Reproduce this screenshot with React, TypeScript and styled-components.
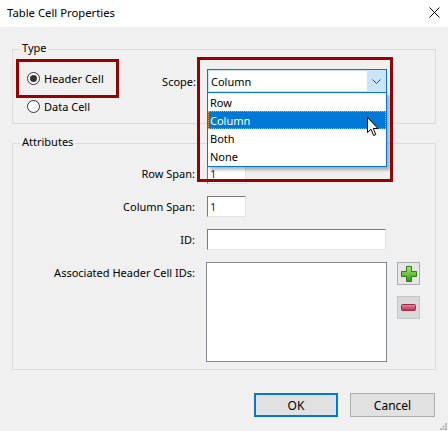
import styled, { createGlobalStyle } from "styled-components";

const GlobalStyle = createGlobalStyle`
  html, body { margin: 0; padding: 0; }
  body {
    font-family: "Noto Sans", "Liberation Sans", sans-serif;
    font-size: 11px;
    color: #000;
  }
`;

const Window = styled.div`
  position: relative;
  width: 448px;
  height: 431px;
  background: #f0f0f0;
  display: flex;
  flex-direction: column;
  overflow: hidden;
`;

const TitleBar = styled.div`
  box-sizing: border-box;
  height: 27px;
  background: #fff;
  display: flex;
  align-items: center;
  justify-content: space-between;
  padding: 0 8px 3px 7px;
  font-size: 11.3px;
`;

const Group = styled.div<{ $height: number; $top: number }>`
  box-sizing: border-box;
  margin: ${(p) => p.$top}px 0 0 12px;
  width: 424px;
  height: ${(p) => p.$height}px;
  border: 1px solid #dcdcdc;
  display: flex;
  flex-direction: column;
`;

const GroupTitle = styled.div`
  align-self: flex-start;
  margin: -9px 0 0 7px;
  padding: 0 2px;
  line-height: 14px;
  background: #f0f0f0;
`;

const TypeBody = styled.div`
  display: flex;
  padding: 4px 0 0 3px;
`;

const RadioCol = styled.div`
  display: flex;
  flex-direction: column;
  width: 103px;
`;

const Highlight = styled.div`
  box-sizing: border-box;
  width: 103px;
  height: 39px;
  border: 3px solid #990000;
  display: flex;
  align-items: center;
  padding: 0 0 1px 8px;
`;

const RadioRow = styled.div<{ $inset?: number }>`
  display: flex;
  align-items: center;
  gap: 4px;
  height: 15px;
  padding-left: ${(p) => p.$inset ?? 0}px;
  margin-top: ${(p) => (p.$inset ? 1 : 0)}px;
`;

const RadioDot = styled.span<{ $checked?: boolean }>`
  box-sizing: border-box;
  width: 13px;
  height: 13px;
  border-radius: 50%;
  border: 1px solid #333;
  background: #fff;
  display: flex;
  align-items: center;
  justify-content: center;
  &::after {
    content: "";
    width: 7px;
    height: 7px;
    border-radius: 50%;
    background: ${(p) => (p.$checked ? "#333" : "transparent")};
  }
`;

const ScopeArea = styled.div`
  display: flex;
  align-items: center;
  margin-top: 10px;
  height: 24px;
`;

const ScopeLabel = styled.div`
  width: 77px;
  text-align: right;
  padding-right: 1px;
  margin-right: 10px;
`;

const ComboWrap = styled.div`
  position: relative;
  width: 180px;
  height: 24px;
`;

const Combo = styled.div`
  box-sizing: border-box;
  height: 24px;
  border: 1px solid #0078d7;
  background: #cce4f7;
  display: flex;
  padding: 1px 0 1px 1px;
`;

const ComboEdit = styled.div`
  flex: 1;
  background: #fff;
  display: flex;
  align-items: center;
  padding-left: 2px;
`;

const ComboArrow = styled.div`
  width: 19px;
  display: flex;
  align-items: center;
  justify-content: center;
`;

const DropList = styled.div`
  position: absolute;
  left: 0;
  top: 23px;
  box-sizing: border-box;
  width: 180px;
  height: 75px;
  border: 1px solid #0078d7;
  background: #fff;
  box-shadow: 3px 3px 3px rgba(0, 0, 0, 0.28);
  z-index: 2;
`;

const DropItem = styled.div<{ $active?: boolean }>`
  box-sizing: border-box;
  height: 18px;
  display: flex;
  align-items: center;
  padding-left: 1px;
  background: ${(p) => (p.$active ? "#0078d7" : "#fff")};
  color: ${(p) => (p.$active ? "#fff" : "#000")};
  border: 1px ${(p) => (p.$active ? "dotted #f5a040" : "solid transparent")};
`;

const RedFrame = styled.div`
  position: absolute;
  left: -10px;
  top: -12px;
  box-sizing: border-box;
  width: 196px;
  height: 125px;
  border: 3px solid #990000;
  pointer-events: none;
  z-index: 3;
`;

const Pointer = styled.svg`
  position: absolute;
  left: 160px;
  top: 48px;
  z-index: 4;
`;

const AttrGrid = styled.div`
  display: grid;
  grid-template-columns: 184px 180px 23px;
  column-gap: 10px;
  row-gap: 12px;
  padding-top: 14px;
`;

const FieldLabel = styled.div`
  height: 21px;
  display: flex;
  align-items: center;
  justify-content: flex-end;
  padding-right: 2px;
  align-self: start;
`;

const TextBox = styled.div<{ $width: number }>`
  box-sizing: border-box;
  width: ${(p) => p.$width}px;
  height: 21px;
  background: #fff;
  border: 1px solid;
  border-color: #7a7a7a #e3e3e3 #e3e3e3 #7a7a7a;
  display: flex;
  align-items: center;
  padding-left: 2px;
  color: #1e1e3c;
`;

const ListBox = styled.div`
  box-sizing: border-box;
  margin-left: -1px;
  width: 181px;
  height: 100px;
  background: #fff;
  border: 1px solid #828790;
`;

const SideButtons = styled.div`
  display: flex;
  flex-direction: column;
  gap: 11px;
`;

const IconButton = styled.div<{ $disabled?: boolean }>`
  box-sizing: border-box;
  width: 23px;
  height: 23px;
  background: ${(p) => (p.$disabled ? "#d9d9d9" : "#e6e6e6")};
  border: 1px solid ${(p) => (p.$disabled ? "#c6c6c6" : "#adadad")};
  display: flex;
  align-items: center;
  justify-content: center;
`;

const Footer = styled.div`
  display: flex;
  justify-content: flex-end;
  gap: 12px;
  margin-top: 23px;
  padding-right: 13px;
`;

const DialogButton = styled.button<{ $primary?: boolean }>`
  box-sizing: border-box;
  width: ${(p) => (p.$primary ? 84 : 85)}px;
  height: 24px;
  margin: 0;
  padding: 0;
  font-family: inherit;
  font-size: 12px;
  color: #000;
  background: #e1e1e1;
  border: ${(p) => (p.$primary ? "2px solid #0078d7" : "1px solid #adadad")};
`;

const Grip = styled.svg`
  position: absolute;
  right: 1px;
  bottom: 1px;
`;

export default function App() {
  return (
    <>
      <GlobalStyle />
      <Window>
        <TitleBar>
          <span>Table Cell Properties</span>
          <svg width="11" height="11" viewBox="0 0 11 11">
            <path d="M0.5 0.5 L10.5 10.5 M10.5 0.5 L0.5 10.5" stroke="#000" strokeWidth="1" />
          </svg>
        </TitleBar>

        <Group $top={22} $height={75}>
          <GroupTitle>Type</GroupTitle>
          <TypeBody>
            <RadioCol>
              <Highlight>
                <RadioRow>
                  <RadioDot $checked />
                  <span>Header Cell</span>
                </RadioRow>
              </Highlight>
              <RadioRow $inset={11}>
                <RadioDot />
                <span>Data Cell</span>
              </RadioRow>
            </RadioCol>
            <ScopeArea>
              <ScopeLabel>Scope:</ScopeLabel>
              <ComboWrap>
                <Combo>
                  <ComboEdit>Column</ComboEdit>
                  <ComboArrow>
                    <svg width="9" height="5" viewBox="0 0 9 5">
                      <path d="M0.5 0.5 L4.5 4.5 L8.5 0.5" fill="none" stroke="#444" strokeWidth="1" />
                    </svg>
                  </ComboArrow>
                </Combo>
                <DropList>
                  <DropItem>Row</DropItem>
                  <DropItem $active>Column</DropItem>
                  <DropItem>Both</DropItem>
                  <DropItem>None</DropItem>
                </DropList>
                <RedFrame />
                <Pointer width="13" height="20" viewBox="0 0 13 20">
                  <path
                    d="M0.5 0.5 L0.5 15.5 L4 12.2 L6.6 18.5 L8.8 17.6 L6.3 11.5 L11 11.5 Z"
                    fill="#fff"
                    stroke="#000"
                    strokeWidth="1"
                    strokeLinejoin="round"
                  />
                </Pointer>
              </ComboWrap>
            </ScopeArea>
          </TypeBody>
        </Group>

        <Group $top={19} $height={227}>
          <GroupTitle>Attributes</GroupTitle>
          <AttrGrid>
            <FieldLabel>Row Span:</FieldLabel>
            <TextBox $width={39}>1</TextBox>
            <span />

            <FieldLabel>Column Span:</FieldLabel>
            <TextBox $width={39}>1</TextBox>
            <span />

            <FieldLabel>ID:</FieldLabel>
            <TextBox $width={179} />
            <span />

            <FieldLabel>Associated Header Cell IDs:</FieldLabel>
            <ListBox />
            <SideButtons>
              <IconButton>
                <svg width="16" height="16" viewBox="0 0 16 16">
                  <defs>
                    <linearGradient id="plusG" x1="0" y1="0" x2="0" y2="1">
                      <stop offset="0" stopColor="#a6ec6a" />
                      <stop offset="1" stopColor="#2e9a18" />
                    </linearGradient>
                  </defs>
                  <path
                    d="M5.5 0.5 H10.5 V5.5 H15.5 V10.5 H10.5 V15.5 H5.5 V10.5 H0.5 V5.5 H5.5 Z"
                    fill="url(#plusG)"
                    stroke="#2b7d16"
                    strokeWidth="1"
                  />
                </svg>
              </IconButton>
              <IconButton $disabled>
                <svg width="15" height="7" viewBox="0 0 15 7">
                  <defs>
                    <linearGradient id="minusG" x1="0" y1="0" x2="0" y2="1">
                      <stop offset="0" stopColor="#ea8aa2" />
                      <stop offset="1" stopColor="#b5304f" />
                    </linearGradient>
                  </defs>
                  <rect x="0.5" y="0.5" width="14" height="6" rx="1" fill="url(#minusG)" stroke="#9c2a45" />
                </svg>
              </IconButton>
            </SideButtons>
          </AttrGrid>
        </Group>

        <Footer>
          <DialogButton $primary>OK</DialogButton>
          <DialogButton>Cancel</DialogButton>
        </Footer>

        <Grip width="7" height="7" viewBox="0 0 7 7">
          <g fill="#b8b8b8">
            <rect x="5" y="0" width="2" height="2" />
            <rect x="2.5" y="2.5" width="2" height="2" />
            <rect x="5" y="2.5" width="2" height="2" />
            <rect x="0" y="5" width="2" height="2" />
            <rect x="2.5" y="5" width="2" height="2" />
            <rect x="5" y="5" width="2" height="2" />
          </g>
        </Grip>
      </Window>
    </>
  );
}
